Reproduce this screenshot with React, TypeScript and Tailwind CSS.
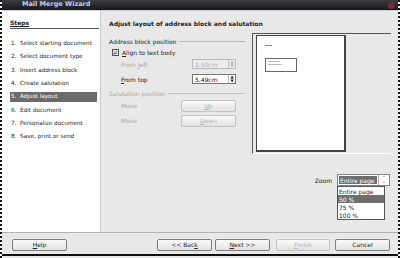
import React from "react";

const steps = [
    "1.  Select starting document",
    "2.  Select document type",
    "3.  Insert address block",
    "4.  Create salutation",
    "5.  Adjust layout",
    "6.  Edit document",
    "7.  Personalize document",
    "8.  Save, print or send",
];

function SpinBox({ value, disabled }: { value: string; disabled?: boolean }) {
    return (
        <div
            className={`flex h-[10px] w-[44px] border ${
                disabled ? "border-[#b8b8b8] bg-[#ececec] text-[#a8a8a8]" : "border-[#777] bg-white text-[#111]"
            }`}
        >
            <span className="flex-1 pl-[2px] leading-[9px]">{value}</span>
            <span className="flex w-[7px] flex-col items-center justify-center border-l border-[#bbb] text-[4px] leading-[4px]">
                <span>▲</span>
                <span>▼</span>
            </span>
        </div>
    );
}

function Btn({ children, disabled, w }: { children: React.ReactNode; disabled?: boolean; w: string }) {
    return (
        <div
            className={`flex h-[12px] items-center justify-center rounded-[2px] border bg-gradient-to-b from-[#fafafa] to-[#e2e2e2] ${w} ${
                disabled ? "border-[#c4c4c4] text-[#b0b0b0]" : "border-[#7d7d7d] text-[#222]"
            }`}
        >
            {children}
        </div>
    );
}

export default function App() {
    return (
        <div className="flex h-[258px] w-[400px] flex-col border-x-[2px] border-dotted border-[#111] bg-white font-['DejaVu_Sans','Liberation_Sans',sans-serif] text-[6px] text-[#222]">
            {/* title bar */}
            <div className="relative flex h-[10px] items-center bg-gradient-to-b from-[#3c3c44] to-[#18181c] pl-[20px]">
                <span className="text-[6.5px] font-bold text-[#c3cdf0]">Mail Merge Wizard</span>
                <span className="absolute right-[3px] top-[2px] h-[7px] w-[7px] rounded-full bg-[#7a2a32]" />
            </div>

            <div className="flex flex-1 border-t border-[#d0d0d0]">
                {/* steps */}
                <div className="w-[99px] border-r border-[#c8c8c8] bg-white pl-[8px] pr-[1px] pt-[7px]">
                    <div className="border-b border-[#555] pb-[1px] font-bold underline">Steps</div>
                    <div className="mt-[9px] flex flex-col text-[5.7px]">
                        {steps.map((s, i) => (
                            <div
                                key={s}
                                className={`mb-[3.4px] flex h-[10px] w-[87px] items-center whitespace-pre pl-[1px] ${
                                    i === 4 ? "bg-[#6b6b6b] text-white" : ""
                                }`}
                            >
                                {s}
                            </div>
                        ))}
                    </div>
                </div>

                {/* right content */}
                <div className="relative flex flex-1 flex-col bg-[#e8e8e8] pl-[8px] pr-[5px] pt-[8px]">
                    <div className="h-[14px] font-bold">Adjust layout of address block and salutation</div>
                    <div className="flex">
                        <div className="flex w-[136px] flex-col pt-[4px]">
                            <div className="flex h-[8px] items-center gap-[3px]">
                                <span>Address block position</span>
                                <span className="flex-1 border-t border-[#b8b8b8]" />
                            </div>
                            <div className="mt-[3px] flex h-[9px] items-center pl-[3px]">
                                <span className="mr-[3px] flex h-[7px] w-[7px] items-center justify-center border border-[#555] bg-[#d8d8d8] text-[6px] leading-none">
                                    ✓
                                </span>
                                <span>
                                    <span className="underline">A</span>lign to text body
                                </span>
                            </div>
                            <div className="mt-[2px] flex h-[10px] items-center pl-[12px] pr-[9px] text-[#a8a8a8]">
                                <span className="flex-1">
                                    From <span className="underline">l</span>eft
                                </span>
                                <SpinBox value="2.50cm" disabled />
                            </div>
                            <div className="mt-[5px] flex h-[10px] items-center pl-[12px] pr-[9px]">
                                <span className="flex-1">
                                    <span className="underline">F</span>rom top
                                </span>
                                <SpinBox value="5.49cm" />
                            </div>
                            <div className="mt-[5px] flex h-[8px] items-center gap-[3px] text-[#a8a8a8]">
                                <span>Salutation position</span>
                                <span className="flex-1 border-t border-[#c4c4c4]" />
                            </div>
                            <div className="mt-[3px] flex h-[11px] items-center pl-[12px] pr-[9px] text-[#a8a8a8]">
                                <span className="flex-1">Move</span>
                                <Btn w="w-[55px]" disabled>
                                    <span className="underline">U</span>p
                                </Btn>
                            </div>
                            <div className="mt-[4px] flex h-[11px] items-center pl-[12px] pr-[9px] text-[#a8a8a8]">
                                <span className="flex-1">Move</span>
                                <Btn w="w-[55px]" disabled>
                                    <span className="underline">D</span>own
                                </Btn>
                            </div>
                        </div>

                        {/* preview */}
                        <div className="ml-[7px] h-[121px] w-[139px] border-b border-l border-t border-[#555] border-b-white pl-[3px] pt-[1px]">
                            <div className="h-[117px] w-[90px] border border-b-[2px] border-r-[2px] border-[#444] bg-white pl-[8px] pt-[9px]">
                                <div className="w-[7px] border-t border-[#888]" />
                                <div className="mt-[12px] flex h-[14px] w-[32px] flex-col gap-[2px] border border-[#666] pl-[2px] pt-[2px]">
                                    <span className="w-[12px] border-t border-[#bbb]" />
                                    <span className="w-[14px] border-t border-[#bbb]" />
                                </div>
                            </div>
                        </div>
                    </div>

                    {/* zoom */}
                    <div className="mt-[20px] flex h-[12px] items-center justify-end gap-[5px] pr-[3px]">
                        <span>Zoom</span>
                        <div className="relative flex h-[12px] w-[53px] border border-[#888] bg-white">
                            <span className="m-[1px] flex flex-1 items-center bg-[#6e6e6e] pl-[1px] text-white">Entire page</span>
                            <span className="flex w-[11px] flex-col items-center justify-center border-l border-[#aaa] text-[4px] leading-[4px]">
                                <span>⌃</span>
                                <span>⌄</span>
                            </span>
                            <div className="absolute left-[-1px] top-[11px] w-[48px] border border-[#555] bg-white">
                                {["Entire page", "50 %", "75 %", "100 %"].map((z) => (
                                    <div
                                        key={z}
                                        className={`flex h-[8px] items-center pl-[1px] ${
                                            z === "50 %" ? "bg-[#6e6e6e] text-white" : ""
                                        }`}
                                    >
                                        {z}
                                    </div>
                                ))}
                            </div>
                        </div>
                    </div>
                </div>
            </div>

            {/* buttons */}
            <div className="flex h-[22px] items-center border-t border-[#b4b4b4] bg-[#e8e8e8] pl-[10px] pr-[8px] pt-[2px]">
                <Btn w="w-[55px]">
                    <span className="underline">H</span>elp
                </Btn>
                <div className="flex-1" />
                <Btn w="w-[55px]">
                    &lt;&lt; Bac<span className="underline">k</span>
                </Btn>
                <div className="ml-[3px]">
                    <Btn w="w-[55px]">
                        <span className="underline">N</span>ext &gt;&gt;
                    </Btn>
                </div>
                <div className="ml-[6px]">
                    <Btn w="w-[54px]" disabled>
                        <span className="underline">F</span>inish
                    </Btn>
                </div>
                <div className="ml-[5px]">
                    <Btn w="w-[55px]">Cancel</Btn>
                </div>
            </div>
            <div className="h-[4px] border-t-[2px] border-[#111] bg-[#e8e8e8]" />
        </div>
    );
}
